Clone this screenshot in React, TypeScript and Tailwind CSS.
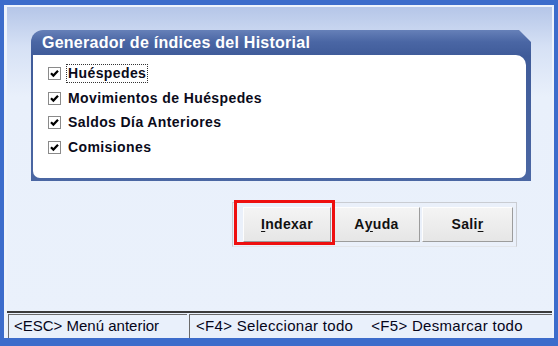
export default function App() {
  const rows = [
    "Huéspedes",
    "Movimientos de Huéspedes",
    "Saldos Día Anteriores",
    "Comisiones",
  ];

  return (
    <div
      className="w-[558px] h-[346px] bg-[#3c6ccb] pt-[5px] px-[4px] pb-[8px] flex flex-col"
      style={{ fontFamily: '"Liberation Sans", Arial, sans-serif' }}
    >
      {/* ventana */}
      <div className="flex-1 flex flex-col border-t-[2px] border-l-[3px] border-r-[2px] border-[#eef3fb] bg-[linear-gradient(180deg,#b5c6e8_0px,#d6e1f5_40px,#e9f0fb_90px,#eaf1fb_100%)]">
        {/* grupo */}
        <div className="ml-[24px] mt-[23px] w-[500px] h-[151px] flex flex-col bg-[linear-gradient(180deg,#6680b8_0px,#4a66a4_12px,#3f5b99_26px,#4b67a3_100%)] rounded-tl-[12px] [clip-path:polygon(0_0,calc(100%-12px)_0,100%_12px,100%_100%,0_100%)]">
          <div className="h-[25px] flex items-center pl-[11px] pt-[1px] text-[16px] font-bold text-white tracking-[0.25px]">
            Generador de índices del Historial
          </div>
          <div className="flex-1 ml-[2px] mr-[5px] mb-[3px] bg-white rounded-tr-[10px] rounded-b-[7px] pt-[6px] pl-[15px] flex flex-col">
            {rows.map((r, i) => (
              <div key={r} className="h-[24.7px] flex items-center gap-[6px]">
                <div className="w-[13px] h-[13px] border border-[#8a8a8a] bg-white flex items-center justify-center">
                  <svg width="9" height="9" viewBox="0 0 9 9">
                    <path d="M1 4.2 L3.4 6.6 L8 1.8" fill="none" stroke="#000" strokeWidth="2.2" />
                  </svg>
                </div>
                <span
                  className={
                    "text-[14px] font-bold text-[#0b0b1a] px-[1px] leading-[17px] tracking-[0.4px] " +
                    (i === 0 ? "outline outline-1 outline-dotted outline-[#333]" : "")
                  }
                >
                  {r}
                </span>
              </div>
            ))}
          </div>
        </div>

        {/* botones */}
        <div className="flex justify-end mr-[35px] mt-[21px]">
          <div className="relative flex gap-[2px] border border-[#c9ccd2] border-b-[#e2e5ea] p-[4px] pl-[10px] pr-[3px] bg-[#eaf0fa]">
            <div className="absolute left-[1px] top-[-3px] w-[101px] h-[45px] border-[3px] border-[#ee0f0f]" />
            {[
              { pre: "", u: "I", post: "ndexar", w: "w-[88px]" },
              { pre: "A", u: "y", post: "uda", w: "w-[87px]" },
              { pre: "Sali", u: "r", post: "", w: "w-[91px]" },
            ].map((b) => (
              <div
                key={b.pre + b.u}
                className={`${b.w} h-[35px] flex items-center justify-center bg-[linear-gradient(180deg,#f4f4f4,#e6e6e6)] border border-[#9c9c9c] border-t-[#fdfdfd] border-l-[#fdfdfd] text-[14px] font-bold text-[#111] tracking-[0.3px]`}
              >
                {b.pre}
                <span className="underline underline-offset-2">{b.u}</span>
                {b.post}
              </div>
            ))}
          </div>
        </div>

        <div className="flex-1" />

        {/* barra de estado */}
        <div className="h-[27px] flex border-t-[2px] border-[#3a3a3a] bg-[#e9f0fb] text-[15px] text-[#05051a]">
          <div className="w-[179px] ml-[1px] border-t border-l border-[#6a6a6a] flex items-center pl-[5px] mt-[1px]">
            &lt;ESC&gt; Menú anterior
          </div>
          <div className="flex-1 ml-[2px] border-t border-l border-[#6a6a6a] flex items-center pl-[6px] mt-[1px] gap-[18px] tracking-[0.3px]">
            <span>&lt;F4&gt; Seleccionar todo</span>
            <span>&lt;F5&gt; Desmarcar todo</span>
          </div>
        </div>
      </div>
    </div>
  );
}
